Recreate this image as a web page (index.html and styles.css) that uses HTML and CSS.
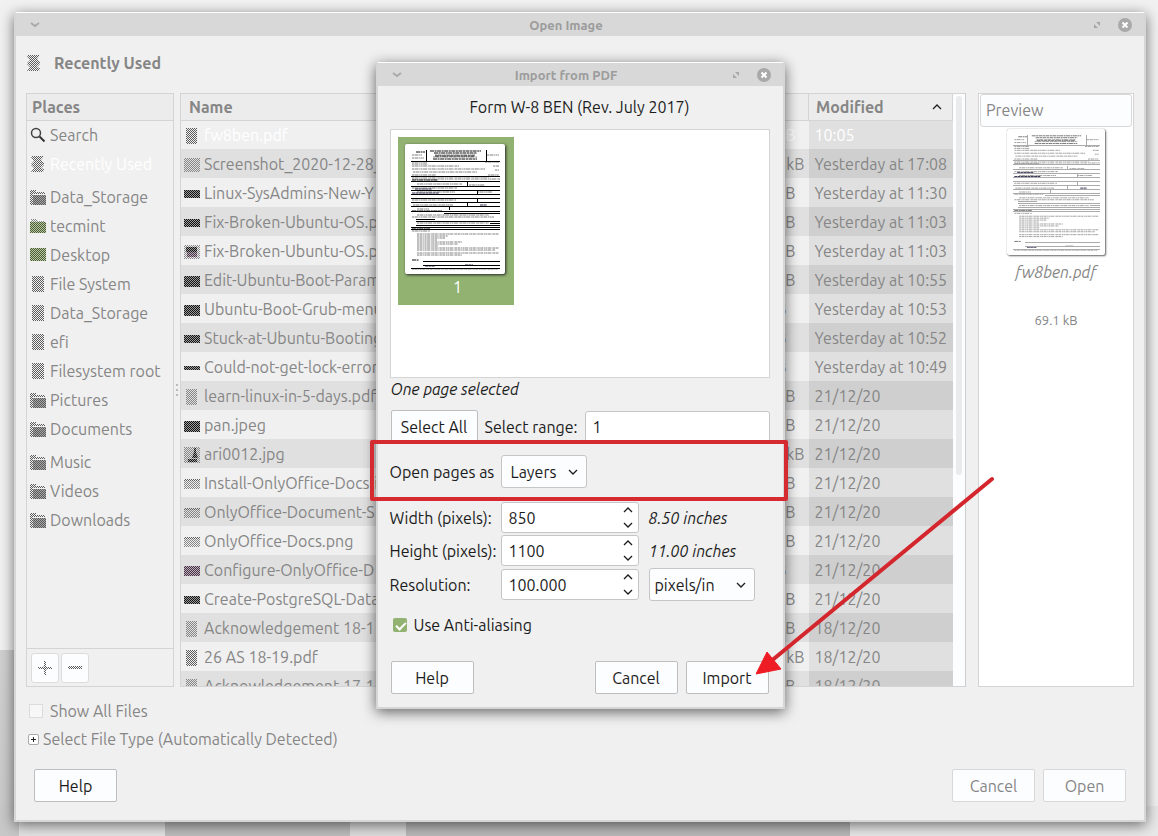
FILE: index.html
```html
<!DOCTYPE html>
<html lang="en">
<head>
<meta charset="utf-8">
<title>Open Image</title>
<link rel="stylesheet" href="styles.css">
</head>
<body>
<svg class="defs" width="0" height="0" aria-hidden="true">
  <defs>
    <pattern id="ck-grey" width="2" height="2" patternUnits="userSpaceOnUse"><path d="M0 0h1v1H0zM1 1h1v1H1z" fill="#5c5c5c"/></pattern>
    <pattern id="ck-light" width="2" height="2" patternUnits="userSpaceOnUse"><path d="M0 0h1v1H0zM1 1h1v1H1z" fill="#868686"/></pattern>
    <pattern id="ck-dark" width="2" height="2" patternUnits="userSpaceOnUse"><path d="M0 0h2v2H0z" fill="#9c9c9c"/><path d="M0 0h1v1H0zM1 1h1v1H1z" fill="#111"/></pattern>
    <pattern id="ck-green" width="2" height="2" patternUnits="userSpaceOnUse"><path d="M0 0h2v2H0z" fill="#b9c8a2"/><path d="M0 0h1v1H0zM1 1h1v1H1z" fill="#4a5c33"/></pattern>
    <pattern id="ck-plum" width="2" height="2" patternUnits="userSpaceOnUse"><path d="M0 0h2v2H0z" fill="#b9adb7"/><path d="M0 0h1v1H0zM1 1h1v1H1z" fill="#4a3346"/></pattern>
    <symbol id="recent" viewBox="0 0 16 16"><path fill="url(#ck-grey)" d="M1 0h13l-3 4 3 3v2l-3 3 3 1-1 3H1l3-4-3-3V8l3-3-3-4z"/></symbol>
    <symbol id="search" viewBox="0 0 16 16"><path d="M9.500 9.500l5 5" stroke="#333" stroke-width="2"/><circle cx="6" cy="6" r="4.500" fill="none" stroke="#444" stroke-width="1.500"/></symbol>
    <symbol id="folder" viewBox="0 0 16 16"><path fill="url(#ck-grey)" d="M0 1h6v2h9v2H3v11H0z"/><path fill="#a6a6a6" d="M3 6h13v10H3z"/><path fill="url(#ck-grey)" d="M3 6h13v10H3z"/></symbol>
    <symbol id="gfolder" viewBox="0 0 16 16"><path fill="url(#ck-light)" d="M1 1h6v2h8v1H1z"/><path fill="url(#ck-green)" d="M0 4h16v11H0z"/></symbol>
    <symbol id="desk" viewBox="0 0 16 16"><path fill="url(#ck-green)" d="M0 1h16v13H0z"/></symbol>
    <symbol id="drive" viewBox="0 0 16 16"><path fill="url(#ck-grey)" d="M2 0h12v16H2z"/></symbol>
    <symbol id="doc" viewBox="0 0 16 16"><path fill="url(#ck-light)" d="M2 0h11v16H2z"/></symbol>
    <symbol id="docdark" viewBox="0 0 16 16"><path fill="url(#ck-grey)" d="M2 0h11v16H2z"/></symbol>
    <symbol id="shot" viewBox="0 0 16 16"><path fill="url(#ck-light)" d="M0 1h16v14H0z"/></symbol>
    <symbol id="wide" viewBox="0 0 16 16"><path fill="url(#ck-dark)" d="M0 4h16v8H0z"/></symbol>
    <symbol id="tall" viewBox="0 0 16 16"><path fill="url(#ck-dark)" d="M0 3h16v11H0z"/></symbol>
    <symbol id="thin" viewBox="0 0 16 16"><path fill="url(#ck-dark)" d="M0 6h16v4H0z"/></symbol>
    <symbol id="pale" viewBox="0 0 16 16"><path fill="url(#ck-grey)" d="M0 3h16v2H0z"/><path fill="url(#ck-light)" d="M0 5h16v8H0z"/></symbol>
    <symbol id="plum" viewBox="0 0 16 16"><path fill="url(#ck-plum)" d="M0 3h16v10H0z"/></symbol>
    <symbol id="photo" viewBox="0 0 16 16"><path fill="url(#ck-light)" d="M0 1h16v14H0z"/><path fill="url(#ck-dark)" d="M2 3h11v5H2z"/><path fill="url(#ck-plum)" d="M3 8h10v5H3z"/></symbol>
    <symbol id="person" viewBox="0 0 16 16"><path fill="url(#ck-light)" d="M0 0h16v16H0z"/><path fill="url(#ck-dark)" d="M10 1h2v4l2 6h-6l2-6zM4 12h9v3H4z"/></symbol>
    <symbol id="down" viewBox="0 0 12 12"><path d="M2 4l4 4 4-4" fill="none" stroke="currentColor" stroke-width="1.300"/></symbol>
    <symbol id="up" viewBox="0 0 12 12"><path d="M2 8l4-4 4 4" fill="none" stroke="currentColor" stroke-width="1.300"/></symbol>
    <symbol id="roll" viewBox="0 0 12 12"><path d="M2 4l4 3 4-3" fill="none" stroke="#a9a9a9" stroke-width="2"/></symbol>
    <symbol id="restore" viewBox="0 0 12 12"><path d="M5 3h4v4zM3 5v4h4z" fill="#a6a6a6"/></symbol>
    <symbol id="close" viewBox="0 0 14 14"><circle cx="7" cy="7" r="7" fill="#a9a9a9"/><path d="M4.500 4.500l5 5m0-5l-5 5" stroke="#fff" stroke-width="2"/></symbol>
    <symbol id="form" viewBox="0 0 100 130">
      <g class="fine" fill="none">
        <path stroke-dasharray="2 .5 4 .7 1 .4" d="M7 11h10M7 14h12M82 11h12M30 11h40M28 13h44M7 18h15M80 18h14M7 20h16M7 22h47M88 22h6M7 25h73M8 28h64M90 26h4M7 31h24M83 31h11M7 33h77M7 35h88M12 40h45M7 44h45M64 41h16M12 48h38M72 48h15M7 56h44M8 61h40M12 65h12M7 73h82M12 79h72M12 71h72M7 87h18"/>
        <path stroke-dasharray="2 .5 3 .7 1 .4" d="M12 90h82M12 92h31M12 94h28M12 96h20M12 98h45M12 100h41M12 102h21M12 104h82M12 106h78M12 109h82M12 111h45M7 125h86"/>
      </g>
      <path class="blue" fill="none" stroke-dasharray="3 .4" d="M10 45h17M7 49h27M75 61h7M20 122h10M60 121h8"/>
      <path class="head" fill="none" stroke-dasharray="4 .6 2 .5" d="M11 8h9M25 7h51M29 9h43M30 12h40M28 15h44M7 36h26M7 67h30M7 84h18M7 116h7"/>
      <path class="rule" fill="none" d="M6 17h89M21 6v11M81 6v11M6 32h89M6 37h89M6 42h89M6 46h89M6 50h89M6 54h89M6 58h89M6 62h89M6 67h89M39 69h56M11 75h19M11 77h84M85 79h10M11 81h84M6 83h89M6 85h89M18 117h77M18 121h77M6 124h89M62 38v4M72 46v4M72 54v4M62 58v4M44 62v4"/>
    </symbol>
  </defs>
</svg>

<div class="window">
  <header class="titlebar">
    <svg class="s12"><use href="#roll"/></svg>
    <span class="title">Open Image</span>
    <svg class="s12"><use href="#restore"/></svg>
    <svg class="s14"><use href="#close"/></svg>
  </header>

  <main class="browser">
    <h1 class="crumb"><svg class="ic"><use href="#recent"/></svg>Recently Used</h1>

    <div class="panels">
      <nav class="places" aria-label="Places">
        <h2 class="colhead">Places</h2>
        <ul class="placelist">
          <li><svg class="ic"><use href="#search"/></svg>Search</li>
          <li class="current"><svg class="ic"><use href="#recent"/></svg>Recently Used</li>
          <li class="group"><svg class="ic"><use href="#folder"/></svg>Data_Storage</li>
          <li><svg class="ic"><use href="#gfolder"/></svg>tecmint</li>
          <li><svg class="ic"><use href="#desk"/></svg>Desktop</li>
          <li><svg class="ic"><use href="#drive"/></svg>File System</li>
          <li><svg class="ic"><use href="#drive"/></svg>Data_Storage</li>
          <li><svg class="ic"><use href="#drive"/></svg>efi</li>
          <li><svg class="ic"><use href="#drive"/></svg>Filesystem root</li>
          <li><svg class="ic"><use href="#folder"/></svg>Pictures</li>
          <li><svg class="ic"><use href="#folder"/></svg>Documents</li>
          <li class="group"><svg class="ic"><use href="#folder"/></svg>Music</li>
          <li><svg class="ic"><use href="#folder"/></svg>Videos</li>
          <li><svg class="ic"><use href="#folder"/></svg>Downloads</li>
        </ul>
        <div class="placetools">
          <button class="tool" type="button" aria-label="Add"><svg class="ic"><path fill="url(#ck-grey)" d="M7 1h2v5l1 1h5v2h-5l-1 1v5H7v-5L6 9H1V7h5l1-1z"/></svg></button>
          <button class="tool" type="button" aria-label="Remove"><svg class="ic"><path fill="url(#ck-grey)" d="M1 6h14v3H1z"/></svg></button>
        </div>
      </nav>
      <div class="grip"><i></i><i></i><i></i></div>

      <div class="files">
        <div class="tableclip">
          <table class="filetable">
            <thead><tr><th class="c-name">Name</th><th class="c-size"></th><th class="c-mod"><span class="sort">Modified<svg class="s12"><use href="#up"/></svg></span></th></tr></thead>
            <tbody>
              <tr class="current"><td><svg class="ic"><use href="#docdark"/></svg>fw8ben.pdf</td><td class="b">kB</td><td>10:05</td></tr>
              <tr><td><svg class="ic"><use href="#shot"/></svg>Screenshot_2020-12-28_</td><td>kB</td><td>Yesterday at 17:08</td></tr>
              <tr><td><svg class="ic"><use href="#wide"/></svg>Linux-SysAdmins-New-Y</td><td class="b">kB</td><td>Yesterday at 11:30</td></tr>
              <tr><td><svg class="ic"><use href="#wide"/></svg>Fix-Broken-Ubuntu-OS.p</td><td class="b">kB</td><td>Yesterday at 11:03</td></tr>
              <tr><td><svg class="ic"><use href="#photo"/></svg>Fix-Broken-Ubuntu-OS.p</td><td class="b">kB</td><td>Yesterday at 11:03</td></tr>
              <tr><td><svg class="ic"><use href="#tall"/></svg>Edit-Ubuntu-Boot-Param</td><td class="b">kB</td><td>Yesterday at 10:55</td></tr>
              <tr><td><svg class="ic"><use href="#tall"/></svg>Ubuntu-Boot-Grub-menu</td><td class="n">kB</td><td>Yesterday at 10:53</td></tr>
              <tr><td><svg class="ic"><use href="#wide"/></svg>Stuck-at-Ubuntu-Booting</td><td class="n">kB</td><td>Yesterday at 10:52</td></tr>
              <tr><td><svg class="ic"><use href="#thin"/></svg>Could-not-get-lock-error</td><td class="n">kB</td><td>Yesterday at 10:49</td></tr>
              <tr><td><svg class="ic"><use href="#doc"/></svg>learn-linux-in-5-days.pdf</td><td class="b">MB</td><td>21/12/20</td></tr>
              <tr><td><svg class="ic"><use href="#tall"/></svg>pan.jpeg</td><td class="b">kB</td><td>21/12/20</td></tr>
              <tr><td><svg class="ic"><use href="#person"/></svg>ari0012.jpg</td><td>kB</td><td>21/12/20</td></tr>
              <tr><td><svg class="ic"><use href="#pale"/></svg>Install-OnlyOffice-Docs-i</td><td class="b">kB</td><td>21/12/20</td></tr>
              <tr><td><svg class="ic"><use href="#pale"/></svg>OnlyOffice-Document-S</td><td class="b">kB</td><td>21/12/20</td></tr>
              <tr><td><svg class="ic"><use href="#pale"/></svg>OnlyOffice-Docs.png</td><td class="b">kB</td><td>21/12/20</td></tr>
              <tr><td><svg class="ic"><use href="#plum"/></svg>Configure-OnlyOffice-D</td><td class="n">kB</td><td>21/12/20</td></tr>
              <tr><td><svg class="ic"><use href="#wide"/></svg>Create-PostgreSQL-Data</td><td class="b">kB</td><td>21/12/20</td></tr>
              <tr><td><svg class="ic"><use href="#doc"/></svg>Acknowledgement 18-1</td><td class="b">kB</td><td>18/12/20</td></tr>
              <tr><td><svg class="ic"><use href="#docdark"/></svg>26 AS 18-19.pdf</td><td>kB</td><td>18/12/20</td></tr>
              <tr><td><svg class="ic"><use href="#doc"/></svg>Acknowledgement 17-1</td><td class="b">kB</td><td>18/12/20</td></tr>
            </tbody>
          </table>
        </div>
        <div class="scroll"><div class="thumb"></div></div>
      </div>

      <aside class="preview">
        <button class="previewhead" type="button">Preview</button>
        <svg class="page soft" viewBox="0 0 100 130"><use href="#form"/></svg>
        <em class="pname">fw8ben.pdf</em>
        <span class="psize">69.1 kB</span>
      </aside>
    </div>

    <label class="check"><input type="checkbox" class="box off">Show All Files</label>
    <button class="expander" type="button"><span class="plus"><svg width="9" height="9"><path d="M4.500 2v5M2 4.500h5" stroke="#222"/></svg></span>Select File Type (Automatically Detected)</button>

    <footer class="actions">
      <button class="btn" type="button">Help</button>
      <span class="spacer"></span>
      <button class="btn dim" type="button">Cancel</button>
      <button class="btn dim" type="button">Open</button>
    </footer>
  </main>

  <div class="layer">
    <section class="dialog" role="dialog" aria-label="Import from PDF">
      <header class="titlebar">
        <svg class="s12"><use href="#roll"/></svg>
        <span class="title">Import from PDF</span>
        <svg class="s12"><use href="#restore"/></svg>
        <svg class="s14"><use href="#close"/></svg>
      </header>
      <form class="import">
        <h2 class="docname">Form W-8 BEN (Rev. July 2017)</h2>
        <div class="pages">
          <figure class="pagecell">
            <svg class="page hard" viewBox="0 0 100 130"><use href="#form"/></svg>
            <figcaption>1</figcaption>
          </figure>
        </div>
        <em class="status">One page selected</em>
        <div class="range">
          <button class="btn" type="button">Select All</button>
          <label for="range">Select range:</label>
          <input class="field grow" id="range" type="text" value="1">
        </div>
        <div class="openas">
          <label for="as">Open pages as</label>
          <span class="combo"><select id="as"><option>Layers</option></select><svg class="s12"><use href="#down"/></svg></span>
        </div>
        <div class="sizes">
          <label for="w">Width (pixels):</label>
          <span class="spin"><input id="w" type="text" value="850"><span class="steps"><button type="button" aria-label="Increase width"><svg class="s12"><use href="#up"/></svg></button><button type="button" aria-label="Decrease width"><svg class="s12"><use href="#down"/></svg></button></span></span>
          <em>8.50 inches</em>
          <label for="h">Height (pixels):</label>
          <span class="spin"><input id="h" type="text" value="1100"><span class="steps"><button type="button" aria-label="Increase height"><svg class="s12"><use href="#up"/></svg></button><button type="button" aria-label="Decrease height"><svg class="s12"><use href="#down"/></svg></button></span></span>
          <em>11.00 inches</em>
          <label for="r">Resolution:</label>
          <span class="spin"><input id="r" type="text" value="100.000"><span class="steps"><button type="button" aria-label="Increase resolution"><svg class="s12"><use href="#up"/></svg></button><button type="button" aria-label="Decrease resolution"><svg class="s12"><use href="#down"/></svg></button></span></span>
          <span class="combo unit"><select aria-label="Resolution unit"><option>pixels/in</option></select><svg class="s12"><use href="#down"/></svg></span>
        </div>
        <label class="check anti"><input type="checkbox" class="box on" checked>Use Anti-aliasing</label>
        <footer class="actions">
          <button class="btn" type="button">Help</button>
          <span class="spacer"></span>
          <button class="btn" type="button">Cancel</button>
          <button class="btn" type="button">Import</button>
        </footer>
      </form>
      <div class="redbox"></div>
      <svg class="arrow" viewBox="0 0 240 200" width="240" height="200"><path d="M236 4L14 187" stroke="#d4262d" stroke-width="4" stroke-linecap="round"/><path d="M0 199l11-22 14 17z" fill="#ee1c25" stroke="#ee1c25"/></svg>
    </section>
  </div>
</div>
</body>
</html>
```
FILE: styles.css
```css
* { box-sizing: border-box; }

body {
  margin: 0;
  height: 100vh;
  min-height: 760px;
  padding: 12px 12px 14px 14px;
  overflow: hidden;
  font: 16px/20px Ubuntu, "Noto Sans", "Open Sans", sans-serif;
  color: #868686;
  background:
    linear-gradient(90deg, #c8c8c8 19px, #e4e4e4 19px 165px, #bdbdbd 165px 350px, #dcdcdc 350px 406px, #b9b9b9 406px 850px, #e8e8e8 850px) bottom / 100% 30px no-repeat,
    linear-gradient(#d0d0d0, #c8c8c8) left bottom / 14px 186px no-repeat,
    #f1f1f1;
}

h1, h2, ul, figure { margin: 0; padding: 0; }
h1, h2 { font-size: inherit; }
button, input, select { font: inherit; color: inherit; }

.defs { position: absolute; }
.ic { width: 16px; height: 16px; flex: none; }
.s12 { width: 12px; height: 12px; flex: none; }
.s14 { width: 14px; height: 14px; flex: none; }

.window {
  position: relative;
  height: 100%;
  display: flex;
  flex-direction: column;
  background: #f0f0f0;
  border: 2px solid #d6d6d6;
  border-top: 1px solid #fff;
  border-radius: 3px 3px 0 0;
  box-shadow: 0 3px 14px rgba(0, 0, 0, .55);
}

.titlebar {
  display: flex;
  align-items: center;
  gap: 15px;
  height: 23px;
  padding: 0 12px 0 13px;
  background: #d8d8d8;
}
.title {
  flex: 1;
  text-align: center;
  font-size: 13px;
  font-weight: 600;
  color: #9c9c9c;
}

.browser {
  flex: 1;
  min-height: 0;
  display: flex;
  flex-direction: column;
  padding: 17px 10px 18px;
}
.crumb {
  display: flex;
  align-items: center;
  gap: 12px;
  padding-bottom: 20px;
  font-weight: 600;
}

.panels { flex: 1; min-height: 0; display: flex; }
.places {
  width: 148px;
  display: flex;
  flex-direction: column;
  border: 1px solid #d4d4d4;
}
.colhead {
  height: 27px;
  margin-bottom: -1px;
  padding: 3px 5px;
  background: #ececec;
  border-bottom: 1px solid #d4d4d4;
  font-weight: 600;
}
.placelist { flex: 1; list-style: none; }
.placelist li {
  display: flex;
  align-items: center;
  gap: 4px;
  height: 29px;
  padding: 0 3px;
  white-space: nowrap;
}
.placelist .group { margin-top: 4px; }
.placelist .current { color: #fff; }
.placetools {
  display: flex;
  gap: 2px;
  height: 38px;
  padding: 4px;
  border-top: 1px solid #d4d4d4;
}
.tool {
  display: flex;
  align-items: center;
  justify-content: center;
  width: 28px;
  height: 30px;
  padding: 0;
  background: #fcfdff;
  border: 1px solid #dcdcdc;
  border-radius: 3px;
}
.grip {
  width: 6px;
  display: flex;
  flex-direction: column;
  align-items: center;
  justify-content: center;
  gap: 3px;
}
.grip i { width: 2px; height: 2px; background: #bbb; }

.files {
  flex: 1;
  min-width: 0;
  display: flex;
  margin-right: 12px;
  border: 1px solid #d4d4d4;
  border-right-color: #ccc;
  overflow: hidden;
}
.tableclip { flex: 1; min-width: 0; overflow: hidden; }
.filetable { width: 100%; table-layout: fixed; border-collapse: collapse; }
.filetable th {
  height: 26px;
  padding: 0 8px;
  text-align: left;
  font-weight: 600;
  background: #ececec;
  border-bottom: 1px solid #d4d4d4;
}
.filetable .c-size { width: 100px; }
.filetable .c-mod { width: 144px; border-left: 1px solid #d4d4d4; border-right: 1px solid #d4d4d4; padding: 0 9px 0 7px; }
.sort { display: flex; align-items: center; justify-content: space-between; color: #868686; }
.sort svg { color: #222; }
.filetable td { height: 29px; padding: 0 4px 0 3px; white-space: nowrap; }
.filetable td .ic { vertical-align: -3px; margin-right: 4px; }
.filetable td:nth-child(2) { text-align: right; }
.filetable td.b { padding-right: 13px; }
.filetable td.n { padding-right: 22px; }
.filetable td:nth-child(3) { background: #e0e0e0; padding-left: 6px; }
.filetable tr:nth-child(even) td { background: #e0e0e0; }
.filetable tr:nth-child(even) td:nth-child(3) { background: #cfcfcf; }
.filetable .current { color: #fff; }
.scroll { width: 12px; padding: 2px 3px 0; background: #fcfdff; }
.thumb { height: 379px; max-height: 90%; width: 6px; border-radius: 3px; background: #ebebeb; }

.preview {
  width: 156px;
  display: flex;
  flex-direction: column;
  align-items: center;
  background: #fff;
  border: 1px solid #d4d4d4;
}
.previewhead {
  align-self: stretch;
  height: 33px;
  margin: 0 1px 2px;
  padding: 0 5px 2px;
  text-align: left;
  background: #fcfdff;
  border: 1px solid #d8d8d8;
  border-radius: 3px;
}
.page { display: block; background: #fff; border-radius: 2px; }
.soft {
  --rule: #a8a8a8;
  --head: #777;
  --fine: #a0a0a0;
  width: 98px;
  height: 126px;
  box-shadow: 1px 1px 2px #666, 0 0 1px #888;
}
.hard {
  --rule: #000;
  --head: #111;
  --fine: #808080;
  width: 100px;
  height: 130px;
  box-shadow: 1px 1px 3px #222;
}
.fine { stroke: var(--fine); stroke-width: 1; }
.head { stroke: var(--head); stroke-width: 1; }
.blue { stroke: #335; stroke-width: 1; }
.rule { stroke: var(--rule); stroke-width: 1; shape-rendering: crispEdges; }
.pname { margin-top: 7px; }
.psize { margin-top: 28px; font-size: 13px; }

.check { display: flex; align-items: center; gap: 7px; }
.browser > .check { margin-top: 14px; padding-left: 3px; }
.box { appearance: none; width: 14px; height: 14px; margin: 0; border: 1px solid #dcdcdc; background: #f7f7f7; }
.on {
  border: 0;
  border-radius: 2px;
  background: #92b272;
  position: relative;
}
.on::after {
  content: "";
  position: absolute;
  left: 3px;
  top: 4px;
  width: 8px;
  height: 4px;
  border: solid #fff;
  border-width: 0 0 2px 2px;
  transform: rotate(-45deg);
}
.expander {
  align-self: flex-start;
  display: flex;
  align-items: center;
  gap: 4px;
  margin: 8px 0 20px 2px;
  padding: 0;
  border: 0;
  background: none;
}
.plus { display: flex; width: 11px; height: 11px; border: 1px solid #aaa; border-radius: 2px; background: #fff; }

.actions { display: flex; gap: 8px; }
.browser .actions { padding: 0 8px; }
.import .actions { padding: 0 1px; }
.spacer { flex: 1; }
.btn {
  min-width: 83px;
  height: 33px;
  padding: 0 9px;
  color: #1c1c1c;
  background: #fcfdff;
  border: 1px solid #bebebe;
  border-radius: 2px;
}
.dim { color: #868686; border-color: #d8d8d8; }

.layer {
  position: absolute;
  inset: 49px 0 auto;
  display: flex;
  justify-content: center;
}
.dialog {
  position: relative;
  width: 409px;
  color: #1c1c1c;
  background: #f0f0f0;
  border: 2px solid #d6d6d6;
  border-top: 1px solid #fff;
  border-radius: 3px 3px 0 0;
  box-shadow: 0 3px 14px rgba(0, 0, 0, .6);
}
.import { display: flex; flex-direction: column; padding: 11px 13px 13px 12px; }
.docname { text-align: center; font-weight: 400; margin-bottom: 12px; }
.pages { height: 249px; padding: 7px; background: #fff; border: 1px solid #d4d4d4; }
.pagecell {
  width: 116px;
  height: 168px;
  padding: 7px;
  background: #92b272;
  color: #fff;
  text-align: center;
}
.pagecell figcaption { margin-top: 3px; padding-left: 4px; }
.status { margin: 1px 0 11px 1px; }
.range { display: flex; align-items: center; gap: 7px; margin-left: 1px; }
.range .btn { min-width: 87px; }
.field, .spin, .combo { background: #fff; border: 1px solid #c6c6c6; border-radius: 3px; }
.field { min-width: 0; height: 31px; padding: 0 7px; }
.grow { flex: 1; }
.openas { display: grid; grid-template-columns: 104px auto 1fr; column-gap: 7px; align-items: center; margin: 12px 0 14px; white-space: nowrap; }
.combo { position: relative; display: flex; align-items: center; height: 33px; width: 86px; background: #fcfdff; }
.combo select { appearance: none; width: 100%; height: 100%; padding: 0 9px; border: 0; background: none; }
.combo svg { position: absolute; right: 7px; pointer-events: none; }
.unit { width: 106px; }
.unit select { padding: 0 5px; }
.sizes { display: grid; grid-template-columns: 104px 138px auto; column-gap: 7px; row-gap: 2px; align-items: center; white-space: nowrap; }
.sizes > :nth-child(3n) { margin-left: 3px; }
.spin { display: flex; height: 31px; }
.spin input { flex: 1; min-width: 0; padding: 0 7px; border: 0; background: none; }
.steps { display: flex; flex-direction: column; justify-content: space-between; width: 21px; }
.steps button { display: flex; height: 14px; padding: 1px 0 0 5px; border: 0; background: none; }
.anti { margin: 14px 0 26px 3px; }

.redbox { position: absolute; left: -8px; right: -5px; top: 377px; height: 61px; border: 4px solid #d62a31; border-radius: 2px; }
.arrow { position: absolute; left: 378px; top: 412px; }
```
